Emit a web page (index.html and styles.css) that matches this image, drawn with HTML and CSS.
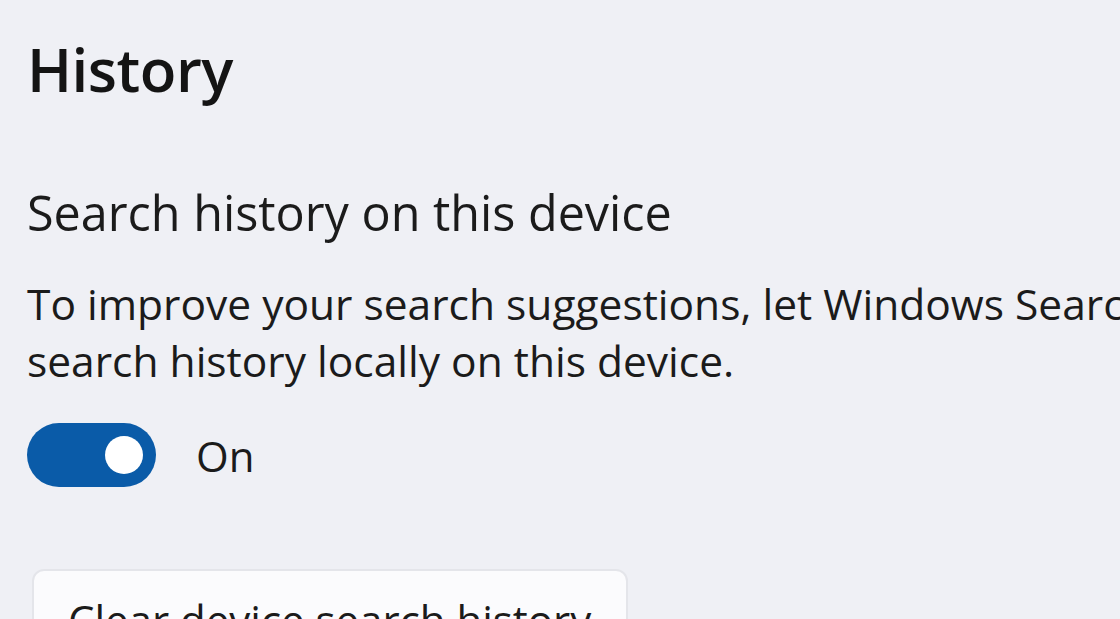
FILE: index.html
```html
<!DOCTYPE html>
<html>
<head>
<meta charset="utf-8">
<link rel="stylesheet" href="styles.css">
</head>
<body>
<main class="page">
  <h1 class="heading">History</h1>
  <section class="setting">
    <h2 class="setting-title">Search history on this device</h2>
    <p class="setting-desc">To improve your search suggestions, let Windows Search store your<br>search history locally on this device.</p>
    <div class="toggle-row">
      <span class="toggle"><span class="thumb"></span></span>
      <span class="toggle-label">On</span>
    </div>
    <button class="btn">Clear device search history</button>
  </section>
</main>
</body>
</html>
```

FILE: styles.css
```css
html, body {
  margin: 0;
  padding: 0;
  background: #eff0f5;
  overflow: hidden;
  height: 619px;
}
.page {
  padding: 28px 0 0 27px;
  font-family: "Open Sans", "Noto Sans", sans-serif;
  color: #1b1b1b;
  width: 1093px;
  overflow: hidden;
  height: 591px;
}
.heading {
  margin: 0;
  font-size: 60px;
  font-weight: 600;
  line-height: 82px;
  letter-spacing: -0.5px;
  color: #141414;
}
.setting {
  margin-top: 72px;
}
.setting-title {
  margin: 0;
  font-size: 48.5px;
  font-weight: 400;
  line-height: 60px;
  white-space: nowrap;
}
.setting-desc {
  margin: 33px 0 0 0;
  font-size: 42.5px;
  line-height: 57px;
  white-space: nowrap;
}
.toggle-row {
  display: flex;
  align-items: center;
  gap: 40px;
  margin-top: 34px;
}
.toggle {
  width: 129px;
  height: 64px;
  border-radius: 32px;
  background: #0a5ba8;
  display: flex;
  align-items: center;
  justify-content: flex-end;
  padding-right: 13px;
  box-sizing: border-box;
}
.thumb {
  width: 38px;
  height: 38px;
  border-radius: 50%;
  background: #fff;
}
.toggle-label {
  font-size: 42px;
}
.btn {
  display: block;
  margin-top: 82px;
  margin-left: 5px;
  width: 596px;
  height: 90px;
  border: 2px solid #e4e5ea;
  border-radius: 12px;
  background: #fbfbfd;
  font-family: inherit;
  font-size: 42px;
  color: #1b1b1b;
  text-align: left;
  padding: 12px 0 0 34px;
  box-sizing: border-box;
  line-height: 1;
  white-space: nowrap;
}
```
